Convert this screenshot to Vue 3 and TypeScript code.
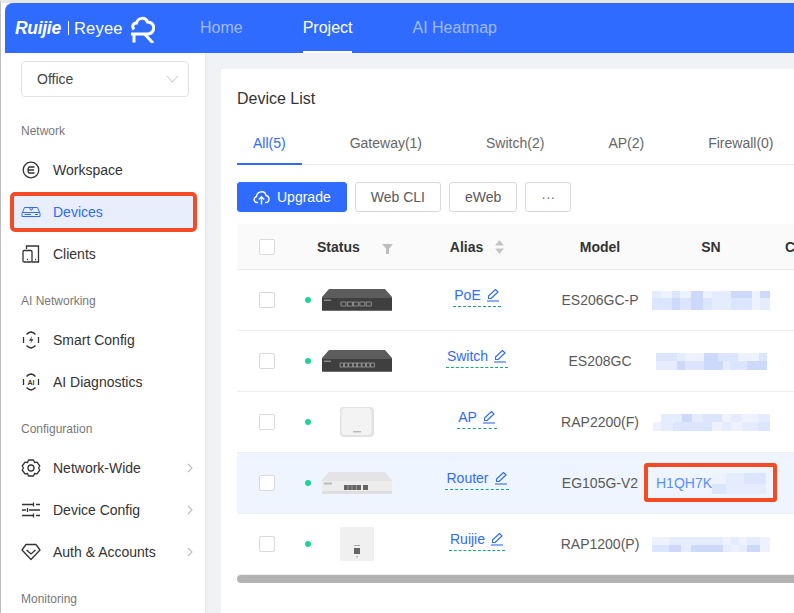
<script setup lang="ts">
import { ref } from 'vue';

type Kind = 'switch' | 'ap' | 'router' | 'wall';

interface Mosaic {
    widths: number[];
    heights: [number, number];
    top: string;
    bottom: string;
}

interface Device {
    alias: string;
    model: string;
    kind: Kind;
    ports: number;
    prefix?: string;
    sn: Mosaic;
}

const shades: Record<string, string> = {
    t: 'transparent',
    e: '#eef2fe',
    a: '#e5ecfd',
    b: '#dbe5fd',
    c: '#ccd9fb'
};

const navGroups = [
    { label: 'Network', items: [
        { name: 'Workspace', icon: 'workspace' },
        { name: 'Devices', icon: 'devices', active: true },
        { name: 'Clients', icon: 'clients' }
    ] },
    { label: 'AI Networking', items: [
        { name: 'Smart Config', icon: 'smart' },
        { name: 'AI Diagnostics', icon: 'ai' }
    ] },
    { label: 'Configuration', items: [
        { name: 'Network-Wide', icon: 'gear', more: true },
        { name: 'Device Config', icon: 'sliders', more: true },
        { name: 'Auth & Accounts', icon: 'auth', more: true }
    ] },
    { label: 'Monitoring', items: [] }
];

const tabs = ['All(5)', 'Gateway(1)', 'Switch(2)', 'AP(2)', 'Firewall(0)'];
const activeTab = ref(0);

const devices: Device[] = [
    { alias: 'PoE', model: 'ES206GC-P', kind: 'switch', ports: 5, sn: {
        widths: [9, 11, 8, 11, 12, 9, 9, 10, 21, 8, 10], heights: [7, 12],
        top: 'aebeceaacec', bottom: 'bbcbcbaabea'
    } },
    { alias: 'Switch', model: 'ES208GC', kind: 'switch', ports: 8, sn: {
        widths: [12, 9, 8, 8, 11, 14, 5, 7, 8, 9, 12, 8], heights: [8, 9],
        top: 'bbaeecbbbeeb', bottom: 'aacbbccabbcc'
    } },
    { alias: 'AP', model: 'RAP2200(F)', kind: 'ap', ports: 0, sn: {
        widths: [8, 12, 9, 10, 11, 9, 10, 9, 11, 8, 8, 12], heights: [8, 9],
        top: 'taacabbeaeea', bottom: 'eabbbbeaeaab'
    } },
    { alias: 'Router', model: 'EG105G-V2', kind: 'router', ports: 5, prefix: 'H1QH7K', sn: {
        widths: [14, 18, 22], heights: [11, 10],
        top: 'eab', bottom: 'baa'
    } },
    { alias: 'Ruijie', model: 'RAP1200(P)', kind: 'wall', ports: 0, sn: {
        widths: [17, 12, 10, 12, 12, 8, 8, 8, 8, 13, 10], heights: [8, 7],
        top: 'eaaaaaeaeae', bottom: 'bcacccaeace'
    } }
];

function splitShades(codes: string) {
    return codes.split('').map((code) => shades[code]);
}
</script>

<template>
    <div class="window">
        <header class="topbar">
            <div class="logo">
                <span class="logo-ruijie">Ruijie</span>
                <span class="logo-bar"></span>
                <span class="logo-reyee">Reyee</span>
                <svg class="logo-mark" width="24" height="27" viewBox="0 0 24 27" fill="none" stroke="#fff" stroke-width="3">
                    <path d="M3 13.500C0.500 10.500 2 7 5.500 7C7 1.500 14.500 0.500 16.500 6C21 6 23.500 9.500 22.500 13.500C21.500 17 19 18 16 18H0" />
                    <path d="M3 18V26.500M13.500 18L22 27" />
                </svg>
            </div>
            <nav class="topnav">
                <a>Home</a>
                <a class="current">Project</a>
                <a>AI Heatmap</a>
            </nav>
        </header>

        <div class="body">
            <aside class="sidebar">
                <div class="select">
                    <span>Office</span>
                    <svg width="13" height="8" viewBox="0 0 13 8" fill="none" stroke="#ccc" stroke-width="1.100">
                        <path d="M1 1l5.500 6L12 1" />
                    </svg>
                </div>

                <section v-for="group in navGroups" :key="group.label" class="nav-group">
                    <div class="nav-label">{{ group.label }}</div>
                    <div class="nav-list">
                        <div v-for="item in group.items" :key="item.name" class="nav-item" :class="{ active: item.active }">
                            <svg class="nav-icon" width="20" height="20" viewBox="0 0 20 20" fill="none" stroke="currentColor" stroke-width="1.300">
                                <template v-if="item.icon === 'workspace'">
                                    <circle cx="10" cy="10" r="7.800" />
                                    <path d="M13.500 7H8.500C6.500 7 6.500 13 8.500 13H13.500M7 10H13" />
                                </template>
                                <template v-else-if="item.icon === 'devices'">
                                    <path d="M1 11.500L3.500 5.500H16.500L19 11.500V14.500H1Z" stroke-width="1" />
                                    <path d="M1 10.500H19M8.500 5.500L9.500 8H11L11.500 5.500M3.500 12.500H10M14 12.500H17" stroke-width="1" />
                                </template>
                                <template v-else-if="item.icon === 'clients'">
                                    <path d="M5.500 5V2H17.500V18H11" />
                                    <rect x="2" y="6.500" width="9" height="11.500" rx="1.200" />
                                    <path d="M6 15.500h1M14 15.500h1" />
                                </template>
                                <template v-else-if="item.icon === 'smart'">
                                    <path d="M5.500 4.500C7 2.800 8.500 2.200 10 2C11.500 2.200 13 2.800 14.500 4.500M17.500 7V13M14.500 15.500C13 17.200 11.500 17.800 10 18C8.500 17.800 7 17.200 5.500 15.500M2.500 13V7" />
                                    <path d="M11 6L8 10.800H10.500L9.200 14L12.500 9.200H10.200Z" fill="currentColor" stroke="none" />
                                </template>
                                <template v-else-if="item.icon === 'ai'">
                                    <path d="M5.500 4.500C7 2.800 8.500 2.200 10 2C11.500 2.200 13 2.800 14.500 4.500M17.500 7V13M14.500 15.500C13 17.200 11.500 17.800 10 18C8.500 17.800 7 17.200 5.500 15.500M2.500 13V7" />
                                    <text x="10" y="12.500" class="ai-mark">AI</text>
                                </template>
                                <template v-else-if="item.icon === 'gear'">
                                    <path d="M7.500 2H12.500L13.500 4.500L16 4.200L18.800 8L17.500 10L18.800 12L16 15.800L13.500 15.500L12.500 18H7.500L6.500 15.500L4 15.800L1.200 12L2.500 10L1.200 8L4 4.200L6.500 4.500Z" stroke-linejoin="round" />
                                    <circle cx="10" cy="10" r="3" />
                                </template>
                                <template v-else-if="item.icon === 'sliders'">
                                    <path d="M1 4.500H12M15 4.500H19M1 10H5M8 10H19M1 15.500H12M15 15.500H19M12.500 2.500V6.500M6.500 8V12M12.500 13.500V17.500" />
                                </template>
                                <template v-else>
                                    <path d="M5 2.500H15L19 8L10 17.500L1 8Z" stroke-linejoin="round" />
                                    <path d="M5.500 8L10 12L14.500 8" />
                                </template>
                            </svg>
                            <span class="nav-name">{{ item.name }}</span>
                            <svg v-if="item.more" class="nav-more" width="6" height="10" viewBox="0 0 6 10" fill="none" stroke="#bbb" stroke-width="1.100">
                                <path d="M1 1l4 4-4 4" />
                            </svg>
                        </div>
                    </div>
                </section>
            </aside>

            <main class="content">
                <div class="card">
                    <h2 class="card-title">Device List</h2>

                    <div class="tabs">
                        <div v-for="(tab, i) in tabs" :key="tab" class="tab" :class="{ on: activeTab === i }" @click="activeTab = i">{{ tab }}</div>
                    </div>

                    <div class="actions">
                        <button class="btn primary">
                            <svg width="17" height="15" viewBox="0 0 17 15" fill="none" stroke="#fff" stroke-width="1.400">
                                <path d="M5 12.500H4C0.500 12.500 0 7.500 3.500 6.500C4 1 12 0 13 5.500C17 6 17 12.500 12.500 12.500H12" />
                                <path d="M8.500 14.500V7M5.800 9.500L8.500 6.800L11.200 9.500" />
                            </svg>
                            Upgrade
                        </button>
                        <button class="btn">Web CLI</button>
                        <button class="btn">eWeb</button>
                        <button class="btn more">···</button>
                    </div>

                    <div class="table-wrap">
                        <table class="devices">
                            <colgroup>
                                <col style="width: 60px" />
                                <col style="width: 107px" />
                                <col style="width: 146px" />
                                <col style="width: 100px" />
                                <col style="width: 122px" />
                                <col style="width: 120px" />
                            </colgroup>
                            <thead>
                                <tr>
                                    <th><span class="check"></span></th>
                                    <th class="status-head">
                                        Status
                                        <svg width="11" height="10" viewBox="0 0 11 10" fill="#bdbdbd">
                                            <path d="M0 0H11L7 4.500V10H4V4.500Z" />
                                        </svg>
                                    </th>
                                    <th class="alias-head">
                                        Alias
                                        <svg width="9" height="14" viewBox="0 0 9 14" fill="#c4c4c4">
                                            <path d="M4.500 0L9 5.500H0ZM4.500 14L0 8.500H9Z" />
                                        </svg>
                                    </th>
                                    <th>Model</th>
                                    <th>SN</th>
                                    <th class="config-head">Config Status</th>
                                </tr>
                            </thead>
                            <tbody>
                                <tr v-for="device in devices" :key="device.alias" :class="{ picked: device.prefix }">
                                    <td><span class="check"></span></td>
                                    <td>
                                        <div class="status">
                                            <span class="dot"></span>
                                            <div class="thumb">
                                                <svg v-if="device.kind === 'switch'" width="70" height="22" viewBox="0 0 70 22">
                                                    <path d="M7 0H63L70 8V22H0V8Z" fill="#5c5c5c" />
                                                    <rect x="0" y="9" width="70" height="13" fill="#3f3f3f" />
                                                    <rect x="0" y="21" width="70" height="1" fill="#6e6e6e" />
                                                    <rect x="2" y="10.500" width="7" height="1.500" fill="#888" />
                                                    <rect v-for="p in device.ports" :key="p" :x="(device.ports === 5 ? 19 : 18) + (p - 1) * (device.ports === 5 ? 6.300 : 4.400)" y="13" :width="device.ports === 5 ? 5 : 3.600" height="4" fill="none" stroke="#bbb" stroke-width="0.600" />
                                                </svg>
                                                <svg v-else-if="device.kind === 'router'" width="70" height="22" viewBox="0 0 70 22">
                                                    <path d="M7 0H63L70 8V22H0V8Z" fill="#e4e4e4" />
                                                    <rect x="0" y="9" width="70" height="10" fill="#ececec" />
                                                    <rect x="0" y="19" width="70" height="3" fill="#dedede" />
                                                    <rect x="2" y="10.500" width="8" height="2" fill="#bbb" />
                                                    <rect x="22" y="13" width="17" height="5" fill="#666" />
                                                    <path d="M26 13V18M30 13V18M34.500 13V18" stroke="#aaa" stroke-width="0.700" />
                                                    <rect x="41" y="13" width="5" height="5" fill="#666" />
                                                </svg>
                                                <svg v-else-if="device.kind === 'ap'" width="34" height="30" viewBox="0 0 34 30">
                                                    <rect x="0" y="0" width="34" height="30" rx="4" fill="#e2e2e2" />
                                                    <rect x="1.500" y="1" width="30" height="27" rx="4" fill="#f3f3f3" />
                                                    <rect x="13" y="24" width="8" height="1.500" fill="#bbb" />
                                                </svg>
                                                <svg v-else width="34" height="34" viewBox="0 0 34 34">
                                                    <rect x="0" y="0" width="34" height="34" rx="2" fill="#f0f0f0" />
                                                    <rect x="14" y="21" width="6" height="6" fill="#666" />
                                                    <rect x="14" y="18" width="6" height="1" fill="#aaa" />
                                                    <rect x="16" y="29" width="2" height="1.500" fill="#bbb" />
                                                </svg>
                                            </div>
                                        </div>
                                    </td>
                                    <td>
                                        <span class="alias">
                                            {{ device.alias }}
                                            <svg width="14" height="14" viewBox="0 0 14 14" fill="none" stroke="#2f6bff" stroke-width="1.100">
                                                <path d="M2.500 10.500V8L9.500 1.500L12 4L5 10.500Z" stroke-linejoin="round" />
                                                <path d="M1 13H13" />
                                            </svg>
                                        </span>
                                    </td>
                                    <td class="model">{{ device.model }}</td>
                                    <td>
                                        <div class="sn">
                                            <span v-if="device.prefix" class="sn-text">{{ device.prefix }}</span>
                                            <div class="mosaic">
                                                <div class="mosaic-row" :style="{ height: device.sn.heights[0] + 'px' }">
                                                    <i v-for="(shade, i) in splitShades(device.sn.top)" :key="i" :style="{ width: device.sn.widths[i] + 'px', background: shade }"></i>
                                                </div>
                                                <div class="mosaic-row" :style="{ height: device.sn.heights[1] + 'px' }">
                                                    <i v-for="(shade, i) in splitShades(device.sn.bottom)" :key="i" :style="{ width: device.sn.widths[i] + 'px', background: shade }"></i>
                                                </div>
                                            </div>
                                            <span v-if="device.prefix" class="sn-mark"></span>
                                        </div>
                                    </td>
                                    <td></td>
                                </tr>
                            </tbody>
                        </table>
                    </div>
                    <div class="scrollbar"></div>
                </div>
            </main>
        </div>
    </div>
</template>

<style scoped>
.window {
    box-sizing: border-box;
    width: 794px;
    height: 613px;
    overflow: hidden;
    display: flex;
    flex-direction: column;
    border-top: 3px solid #e6e6e6;
    border-left: 1px solid #bdbdbd;
    padding-left: 4px;
    background: #fff;
    font-family: "Liberation Sans", Arial, sans-serif;
    font-size: 14px;
    color: #333;
}

.topbar {
    flex: none;
    height: 50px;
    display: flex;
    align-items: center;
    background: #2f6bff;
    border-top-left-radius: 8px;
}

.logo {
    width: 195px;
    display: flex;
    align-items: center;
    padding-left: 10px;
    box-sizing: border-box;
    color: #fff;
}

.logo-ruijie {
    width: 47px;
    font-size: 17.500px;
    font-weight: 700;
    font-style: italic;
    letter-spacing: -0.300px;
}

.logo-bar {
    width: 1px;
    height: 14px;
    margin: 0 5px 0 6px;
    background: #fff;
}

.logo-reyee {
    width: 52px;
    font-size: 16.500px;
    letter-spacing: 0.200px;
}

.logo-mark {
    margin: 2px 0 0 5px;
}

.topnav {
    height: 100%;
    display: flex;
    gap: 60px;
    font-size: 16px;
}

.topnav a {
    display: flex;
    align-items: center;
    box-sizing: border-box;
    color: rgba(255, 255, 255, 0.55);
    border-bottom: 2px solid transparent;
    border-top: 2px solid transparent;
}

.topnav a.current {
    color: #fff;
    border-bottom-color: #fff;
}

.body {
    flex: 1;
    min-height: 0;
    display: flex;
}

.sidebar {
    flex: none;
    width: 200px;
    box-sizing: border-box;
    padding: 8px 0 0;
    background: #fff;
}

.select {
    box-sizing: border-box;
    width: 168px;
    height: 36px;
    margin-left: 16px;
    padding: 0 9px 0 15px;
    display: flex;
    align-items: center;
    justify-content: space-between;
    border: 1px solid #e2e2e2;
    border-radius: 4px;
    color: #444;
}

.nav-group {
    margin-top: 23px;
}

.nav-group:first-of-type {
    margin-top: 26px;
}

.nav-label {
    height: 16px;
    line-height: 16px;
    padding-left: 16px;
    font-size: 12px;
    color: #777;
}

.nav-list {
    display: flex;
    flex-direction: column;
    gap: 10px;
    margin-top: 15px;
}

.nav-list:empty {
    display: none;
}

.nav-item {
    height: 32px;
    margin: 0 12px 0 9px;
    padding-left: 7px;
    display: flex;
    align-items: center;
    color: #333;
}

.nav-item.active {
    color: #2f6bff;
    background: #e8eefc;
    outline: 4.500px solid #f44b25;
    border-radius: 1px;
}

.nav-icon {
    flex: none;
}

.ai-mark {
    font-size: 7px;
    font-weight: 700;
    text-anchor: middle;
    fill: currentColor;
    stroke: none;
}

.nav-name {
    margin-left: 12px;
    flex: 1;
}

.content {
    flex: 1;
    min-width: 0;
    padding: 16px 0 0 16px;
    background: #f0f2f5;
    box-shadow: inset 3px 0 3px -2px #e2e4e8;
}

.card {
    height: 100%;
    padding: 0 0 0 16px;
    background: #fff;
}

.card-title {
    box-sizing: border-box;
    margin: 0;
    padding-top: 20px;
    height: 42px;
    line-height: 20px;
    font-size: 16px;
    font-weight: 400;
    color: #333;
}

.tabs {
    display: flex;
    gap: 32px;
    height: 54px;
    box-sizing: border-box;
    border-bottom: 1px solid #e8e8e8;
    white-space: nowrap;
}

.tab {
    flex: none;
    height: 54px;
    box-sizing: border-box;
    padding: 23px 16px 0;
    line-height: 18px;
    color: #666;
}

.tab.on {
    color: #2f6bff;
    border-bottom: 2px solid #2f6bff;
}

.actions {
    display: flex;
    gap: 8px;
    margin-top: 17px;
}

.btn {
    box-sizing: border-box;
    height: 30px;
    padding: 0 15px;
    display: flex;
    align-items: center;
    gap: 7px;
    background: #fff;
    border: 1px solid #d9d9d9;
    border-radius: 3px;
    font: inherit;
    color: #595959;
}

.btn.primary {
    padding: 0 15px;
    background: #2f6bff;
    border-color: #2f6bff;
    color: #fff;
}

.btn.more {
    width: 46px;
    justify-content: center;
    color: #777;
}

.table-wrap {
    margin-top: 12px;
    overflow: hidden;
}

.devices {
    width: 655px;
    table-layout: fixed;
    border-collapse: collapse;
}

th {
    height: 45px;
    padding: 0;
    background: #fafafa;
    border-bottom: 1px solid #eee;
    font-weight: 700;
    color: #333;
    white-space: nowrap;
}

td {
    height: 60px;
    padding: 0;
    text-align: center;
    border-bottom: 1px solid #eee;
}

.picked td {
    background: #eff5ff;
}

.check {
    display: block;
    box-sizing: border-box;
    width: 16px;
    height: 16px;
    margin: 0 auto;
    background: #fff;
    border: 1px solid #d9d9d9;
    border-radius: 2px;
}

.status-head {
    text-align: left;
    padding-left: 20px;
}

.status-head svg {
    margin-left: 18px;
    vertical-align: -2px;
}

.alias-head svg {
    margin-left: 8px;
    vertical-align: -2px;
}

.config-head {
    text-align: left;
    padding-left: 13px;
}

.status {
    display: flex;
    align-items: center;
    padding-left: 8px;
}

.dot {
    flex: none;
    width: 6px;
    height: 6px;
    border-radius: 50%;
    background: #1ed39a;
}

.thumb {
    width: 70px;
    margin-left: 11px;
    display: flex;
    justify-content: center;
}

.thumb svg {
    display: block;
}

.alias {
    display: inline-flex;
    align-items: center;
    gap: 5px;
    margin-bottom: 6px;
    padding: 0 1px 3px;
    color: #2f6bff;
    border-bottom: 1px dashed #12a87c;
}

.model {
    color: #595959;
    white-space: nowrap;
}

.sn {
    position: relative;
    display: flex;
    align-items: center;
    justify-content: center;
}

.sn-text {
    color: #5b8eff;
}

.mosaic-row {
    display: flex;
}

.mosaic-row i {
    display: block;
    flex: none;
}

.sn-mark {
    position: absolute;
    box-sizing: border-box;
    left: -6px;
    right: -5px;
    top: 50%;
    height: 39px;
    margin-top: -20px;
    border: 4px solid #f44b25;
    border-radius: 3px;
}

.scrollbar {
    height: 8px;
    background: #b3b3b3;
    border-radius: 4px 0 0 4px;
}
</style>

<style>
body {
    overflow: hidden;
}
</style>
